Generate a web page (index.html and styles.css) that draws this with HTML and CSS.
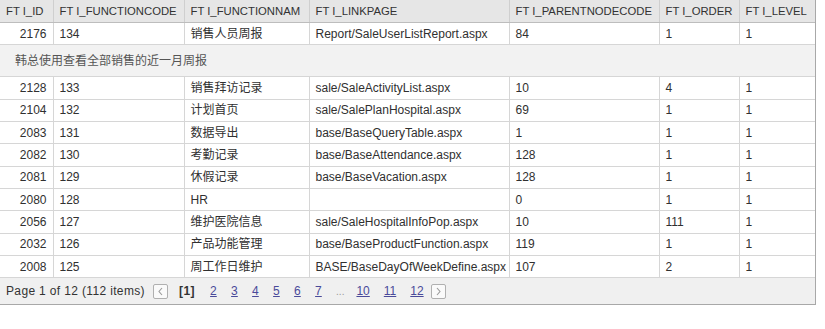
FILE: index.html
```html
<!DOCTYPE html>
<html>
<head>
<meta charset="utf-8">
<link rel="stylesheet" href="styles.css">
</head>
<body>
<div class="grid">
<table class="tbl">
<colgroup>
<col class="c1"><col class="c2"><col class="c3"><col class="c4"><col class="c5"><col class="c6"><col class="c7">
</colgroup>
<thead>
<tr><th>FT I_ID</th><th>FT I_FUNCTIONCODE</th><th>FT I_FUNCTIONNAM</th><th>FT I_LINKPAGE</th><th>FT I_PARENTNODECODE</th><th>FT I_ORDER</th><th>FT I_LEVEL</th></tr>
</thead>
<tbody>
<tr><td class="id">2176</td><td>134</td><td>销售人员周报</td><td>Report/SaleUserListReport.aspx</td><td>84</td><td>1</td><td>1</td></tr>
<tr class="detail"><td colspan="7">韩总使用查看全部销售的近一月周报</td></tr>
<tr><td class="id">2128</td><td>133</td><td>销售拜访记录</td><td>sale/SaleActivityList.aspx</td><td>10</td><td>4</td><td>1</td></tr>
<tr><td class="id">2104</td><td>132</td><td>计划首页</td><td>sale/SalePlanHospital.aspx</td><td>69</td><td>1</td><td>1</td></tr>
<tr><td class="id">2083</td><td>131</td><td>数据导出</td><td>base/BaseQueryTable.aspx</td><td>1</td><td>1</td><td>1</td></tr>
<tr><td class="id">2082</td><td>130</td><td>考勤记录</td><td>base/BaseAttendance.aspx</td><td>128</td><td>1</td><td>1</td></tr>
<tr><td class="id">2081</td><td>129</td><td>休假记录</td><td>base/BaseVacation.aspx</td><td>128</td><td>1</td><td>1</td></tr>
<tr><td class="id">2080</td><td>128</td><td>HR</td><td></td><td>0</td><td>1</td><td>1</td></tr>
<tr><td class="id">2056</td><td>127</td><td>维护医院信息</td><td>sale/SaleHospitalInfoPop.aspx</td><td>10</td><td>111</td><td>1</td></tr>
<tr><td class="id">2032</td><td>126</td><td>产品功能管理</td><td>base/BaseProductFunction.aspx</td><td>119</td><td>1</td><td>1</td></tr>
<tr><td class="id">2008</td><td>125</td><td>周工作日维护</td><td>BASE/BaseDayOfWeekDefine.aspx</td><td>107</td><td>2</td><td>1</td></tr>
</tbody>
</table>
<div class="pager">
<span class="info">Page 1 of 12 (112 items)</span>
<span class="nav"><svg width="7" height="9" viewBox="0 0 7 9"><path d="M5 1 L2 4.5 L5 8" fill="none" stroke="#9a9a9a" stroke-width="1.1"/></svg></span>
<span class="cur">[1]</span>
<a class="pg">2</a><a class="pg">3</a><a class="pg">4</a><a class="pg">5</a><a class="pg">6</a><a class="pg">7</a>
<span class="dots">...</span>
<a class="pg">10</a><a class="pg">11</a><a class="pg last">12</a>
<span class="nav"><svg width="7" height="9" viewBox="0 0 7 9"><path d="M2 1 L5 4.5 L2 8" fill="none" stroke="#9a9a9a" stroke-width="1.1"/></svg></span>
</div>
</div>
</body>
</html>
```

FILE: styles.css
```css
body {
  margin: 0;
  background: #ffffff;
  font-family: "Liberation Sans", "Noto Sans CJK SC", sans-serif;
  font-size: 12px;
  color: #303030;
}
.grid {
  width: 816px;
  border-right: 1px solid #a8a8a8;
  border-bottom: 1px solid #a8a8a8;
  box-sizing: border-box;
}
.tbl {
  width: 815px;
  table-layout: fixed;
  border-collapse: collapse;
}
.c1 { width: 53px; }
.c2 { width: 131px; }
.c3 { width: 125px; }
.c4 { width: 200px; }
.c5 { width: 150px; }
.c6 { width: 80px; }
.c7 { width: 76px; }
.tbl th {
  height: 22px;
  padding: 0 6px;
  line-height: 16px;
  background: #e6e6e6;
  border-left: 1px solid #cfcfcf;
  border-bottom: 1px solid #bdbdbd;
  font-weight: normal;
  font-size: 11.3px;
  text-align: left;
  white-space: nowrap;
  overflow: hidden;
  color: #333333;
}
.tbl th:first-child, .tbl td:first-child { border-left: none; }
.tbl td {
  height: 21.35px;
  padding: 0 6px;
  line-height: 16px;
  border-left: 1px solid #d6d6d6;
  border-bottom: 1px solid #d6d6d6;
  white-space: nowrap;
  overflow: hidden;
}
.tbl td.id { text-align: right; }
.tbl tr.detail td {
  height: 31px;
  background: #f2f2f2;
  padding-left: 15px;
  color: #555555;
}
.pager {
  display: flex;
  align-items: center;
  height: 26px;
  padding-left: 6px;
  background: #f0f0f0;
  color: #333333;
}
.info { margin-right: 8px; letter-spacing: 0.35px; }
.nav {
  display: inline-flex;
  align-items: center;
  justify-content: center;
  width: 13px;
  height: 13px;
  border: 1px solid #b0b0b0;
  border-radius: 2px;
  background: #fafafa;
}
.cur { font-weight: bold; margin: 0 15px 0 11px; letter-spacing: 0.5px; }
.pg {
  color: #4a4a9a;
  text-decoration: underline;
  margin-right: 14px;
  min-width: 7px;
}
.dots { color: #999999; margin-right: 12px; font-size: 10px; }
.pg.last { margin-right: 7px; }
```
